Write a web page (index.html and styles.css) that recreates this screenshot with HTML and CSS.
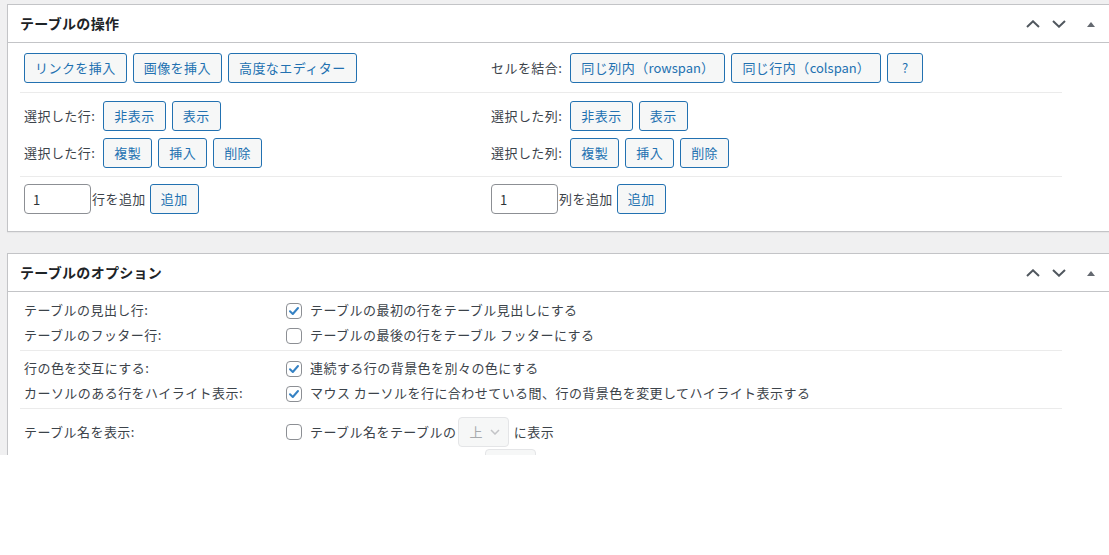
FILE: index.html
```html
<!DOCTYPE html>
<html lang="ja">

<head>
  <meta charset="UTF-8" />
  <title>テーブルの操作</title>
  <link rel="stylesheet" href="styles.css">
</head>

<body>
  <div class="screen">

    <!-- テーブルの操作 -->
    <div class="postbox">
      <div class="postbox-header">
        <h2>テーブルの操作</h2>
        <div class="handle-actions">
          <span class="handle up"><svg width="14" height="8" viewBox="0 0 14 8"><polyline points="1,7 7,1.3 13,7" /></svg></span>
          <span class="handle down"><svg width="14" height="8" viewBox="0 0 14 8"><polyline points="1,1 7,6.7 13,1" /></svg></span>
          <span class="handle toggle"><svg width="8" height="5" viewBox="0 0 8 5"><polygon points="0,5 4,0 8,5" /></svg></span>
        </div>
      </div>
      <div class="inside">
        <div class="ops">
          <div class="ops-row first">
            <div class="cell">
              <button class="btn">リンクを挿入</button>
              <button class="btn">画像を挿入</button>
              <button class="btn">高度なエディター</button>
            </div>
            <div class="cell">
              <span class="label">セルを結合:</span>
              <button class="btn">同じ列内（<span class="en">rowspan</span>）</button>
              <button class="btn">同じ行内（<span class="en">colspan</span>）</button>
              <button class="btn help">?</button>
            </div>
          </div>

          <div class="ops-row middle">
            <div class="cell stack">
              <div class="line"><span class="label">選択した行:</span><button class="btn">非表示</button><button class="btn">表示</button></div>
              <div class="line"><span class="label">選択した行:</span><button class="btn">複製</button><button class="btn">挿入</button><button class="btn">削除</button></div>
            </div>
            <div class="cell stack">
              <div class="line"><span class="label">選択した列:</span><button class="btn">非表示</button><button class="btn">表示</button></div>
              <div class="line"><span class="label">選択した列:</span><button class="btn">複製</button><button class="btn">挿入</button><button class="btn">削除</button></div>
            </div>
          </div>

          <div class="ops-row last">
            <div class="cell">
              <input class="num" type="text" value="1"><span class="add-text">行を追加</span><button class="btn">追加</button>
            </div>
            <div class="cell">
              <input class="num" type="text" value="1"><span class="add-text">列を追加</span><button class="btn">追加</button>
            </div>
          </div>
        </div>
      </div>
    </div>

    <!-- テーブルのオプション -->
    <div class="postbox">
      <div class="postbox-header">
        <h2>テーブルのオプション</h2>
        <div class="handle-actions">
          <span class="handle up"><svg width="14" height="8" viewBox="0 0 14 8"><polyline points="1,7 7,1.3 13,7" /></svg></span>
          <span class="handle down"><svg width="14" height="8" viewBox="0 0 14 8"><polyline points="1,1 7,6.7 13,1" /></svg></span>
          <span class="handle toggle"><svg width="8" height="5" viewBox="0 0 8 5"><polygon points="0,5 4,0 8,5" /></svg></span>
        </div>
      </div>
      <div class="inside">
        <div class="options">
          <div class="opt-group g1">
            <div class="opt-row">
              <div class="opt-label">テーブルの見出し行:</div>
              <div class="opt-field"><span class="check on"><svg width="16" height="16" viewBox="0 0 16 16"><polyline points="4,8.3 6.8,11 12,5" /></svg></span>テーブルの最初の行をテーブル見出しにする</div>
            </div>
            <div class="opt-row">
              <div class="opt-label">テーブルのフッター行:</div>
              <div class="opt-field"><span class="check"></span>テーブルの最後の行をテーブル フッターにする</div>
            </div>
          </div>

          <div class="opt-group g2">
            <div class="opt-row">
              <div class="opt-label">行の色を交互にする:</div>
              <div class="opt-field"><span class="check on"><svg width="16" height="16" viewBox="0 0 16 16"><polyline points="4,8.3 6.8,11 12,5" /></svg></span>連続する行の背景色を別々の色にする</div>
            </div>
            <div class="opt-row">
              <div class="opt-label">カーソルのある行をハイライト表示:</div>
              <div class="opt-field"><span class="check on"><svg width="16" height="16" viewBox="0 0 16 16"><polyline points="4,8.3 6.8,11 12,5" /></svg></span>マウス カーソルを行に合わせている間、行の背景色を変更してハイライト表示する</div>
            </div>
          </div>

          <div class="opt-group g3">
            <div class="opt-row tall">
              <div class="opt-label">テーブル名を表示:</div>
              <div class="opt-field"><span class="check"></span>テーブル名をテーブルの<span class="select">上<svg width="10" height="6" viewBox="0 0 10 6"><polyline points="1,1 5,5 9,1" /></svg></span>に表示</div>
            </div>
            <div class="opt-row tall">
              <div class="opt-label">テーブルの説明を表示:</div>
              <div class="opt-field"><span class="check"></span>テーブルの説明をテーブルの<span class="select">下<svg width="10" height="6" viewBox="0 0 10 6"><polyline points="1,1 5,5 9,1" /></svg></span>に表示</div>
            </div>
          </div>
        </div>
      </div>
    </div>

  </div>
</body>

</html>
```

FILE: styles.css
```css
* {
  box-sizing: border-box;
}

html,
body {
  margin: 0;
  padding: 0;
  background: #fff;
}

body {
  font-family: "Noto Sans CJK JP", "Noto Sans", sans-serif;
  font-size: 13px;
  line-height: 1.4;
  letter-spacing: 0.45px;
  color: #3c434a;
}

.screen {
  height: 455px;
  overflow: hidden;
  background: #f0f0f1;
  padding: 4px 0 0 7px;
}

.postbox {
  width: 1104px;
  background: #fff;
  border: 1px solid #c3c4c7;
  box-shadow: 0 1px 1px rgba(0, 0, 0, 0.04);
  margin-bottom: 21px;
}

.postbox-header {
  display: flex;
  align-items: center;
  height: 38px;
  border-bottom: 1px solid #c3c4c7;
}

.postbox-header h2 {
  flex: 1;
  margin: 0;
  padding: 0 12px;
  font-size: 14px;
  font-weight: 700;
  line-height: 37px;
  letter-spacing: 0.3px;
  color: #1d2327;
}

.handle-actions {
  display: flex;
  height: 37px;
}

.handle {
  display: flex;
  align-items: center;
  justify-content: center;
  width: 26px;
}

.handle.toggle {
  width: 38px;
  padding-top: 1px;
}

.handle polyline {
  fill: none;
  stroke: #50575e;
  stroke-width: 2;
}

.handle polygon {
  fill: #646970;
}

.inside {
  padding: 0 12px 14px;
}

/* テーブルの操作 */

.ops {
  width: 1042px;
}

.ops-row {
  display: grid;
  grid-template-columns: 467px 1fr;
  border-bottom: 1px solid #ebebeb;
}

.ops-row.first {
  padding: 10px 0 9px;
}

.ops-row.middle {
  padding: 8px 0 8px;
}

.ops-row.last {
  padding: 7px 0 3px;
  border-bottom: none;
}

.cell {
  display: flex;
  align-items: center;
  padding: 0 4px;
}

.cell.stack {
  flex-direction: column;
  align-items: flex-start;
  gap: 7px;
}

.line {
  display: flex;
  align-items: center;
}

.label {
  margin-right: 8px;
  white-space: nowrap;
}

.btn {
  height: 30px;
  margin: 0 6px 0 0;
  padding: 0 10px;
  font-family: inherit;
  font-size: 13px;
  line-height: 28px;
  letter-spacing: 0.45px;
  color: #2271b1;
  background: #f6f7f7;
  border: 1px solid #2271b1;
  border-radius: 3px;
  white-space: nowrap;
  cursor: pointer;
}

.btn .en {
  letter-spacing: 0;
}

.btn.help {
  min-width: 36px;
}

.num {
  width: 67px;
  height: 30px;
  padding: 0 8px;
  font-family: inherit;
  font-size: 13px;
  color: #2c3338;
  border: 1px solid #8c8f94;
  border-radius: 4px;
}

.add-text {
  margin: 0 4px 0 1px;
}

/* テーブルのオプション */

.options {
  width: 1042px;
}

.opt-group {
  border-bottom: 1px solid #ebebeb;
}

.opt-group.g1 {
  padding: 6px 0 2px;
}

.opt-group.g2 {
  padding: 5px 0 2px;
}

.opt-group.g3 {
  padding: 8px 0 0;
  border-bottom: none;
}

.opt-row {
  display: grid;
  grid-template-columns: 262px 1fr;
  align-items: center;
  height: 25px;
}

.opt-row.tall {
  height: 30px;
  margin-bottom: 2px;
}

.opt-label,
.opt-field {
  padding: 0 4px;
  white-space: nowrap;
}

.opt-field {
  display: flex;
  align-items: center;
}

.check {
  display: inline-block;
  width: 16px;
  height: 16px;
  margin-right: 8px;
  border: 1px solid #8c8f94;
  border-radius: 4px;
  background: #fff;
  position: relative;
}

.check svg {
  position: absolute;
  left: -1px;
  top: -1px;
}

.check polyline {
  fill: none;
  stroke: #3582c4;
  stroke-width: 2;
  stroke-linecap: round;
  stroke-linejoin: round;
}

.select {
  display: inline-flex;
  align-items: center;
  gap: 7px;
  height: 30px;
  margin: 0 5px 0 2px;
  padding: 0 8px 0 10px;
  color: #a7aaad;
  background: #f6f7f7;
  border: 1px solid #e4e5e7;
  border-radius: 4px;
}

.select polyline {
  fill: none;
  stroke: #c3c4c7;
  stroke-width: 1.5;
}
```
